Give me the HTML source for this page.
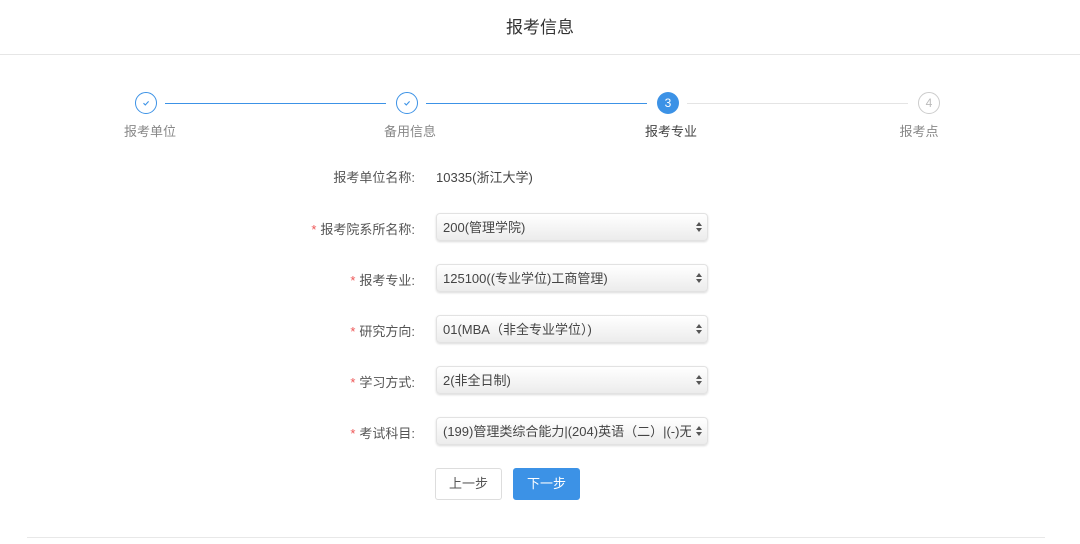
<!DOCTYPE html>
<html><head><meta charset="utf-8"><style>
body{margin:0;width:1080px;height:544px;background:#fff;font-family:"Liberation Sans","Noto Sans CJK SC",sans-serif;position:relative;overflow:hidden;color:#333}
.a{position:absolute}
.hd{left:0;top:0;width:1080px;height:54px;border-bottom:1px solid #e6e6e6;text-align:center;line-height:56px;font-size:17px;color:#333}
.c{width:22px;height:22px;border-radius:50%;box-sizing:border-box;text-align:center;line-height:20px;font-size:12px}
.c svg{position:absolute;left:5px;top:5px}
.done{border:1px solid #3c92e6;color:#3c92e6}
.cur{background:#3c92e6;color:#fff;line-height:22px}
.todo{border:1px solid #ccc;color:#bbb}
.ln{height:1px;top:103px}
.lb{top:120px;font-size:13px;color:#888;width:80px;text-align:center}
.fl{font-size:13px;color:#555;text-align:right;width:200px;left:215px}
.fl i{color:#e55;font-style:normal;margin-right:4px}
.sel{left:436px;width:272px;height:28px;box-sizing:border-box;border:1px solid #e2e2e2;border-radius:4px;background:linear-gradient(#fff,#ececec);box-shadow:0 1px 2px rgba(0,0,0,.15);font-size:13px;color:#444;line-height:28px;padding-left:6px;white-space:nowrap}
.sel span{display:block;overflow:hidden;width:248px}
.sel:after{content:"";position:absolute;right:5px;top:8px;width:0;height:0;border:3px solid transparent;border-bottom:4px solid #555;border-top:none}
.sel:before{content:"";position:absolute;right:5px;top:14px;width:0;height:0;border:3px solid transparent;border-top:4px solid #555;border-bottom:none}
.btn{top:468px;width:67px;height:32px;box-sizing:border-box;border-radius:3px;text-align:center;line-height:30px;font-size:13px}
</style></head><body>
<div class="a hd">报考信息</div>
<div class="a ln" style="left:165px;width:221px;background:#3c92e6"></div>
<div class="a ln" style="left:426px;width:221px;background:#3c92e6"></div>
<div class="a ln" style="left:687px;width:221px;background:#e4e4e4"></div>
<div class="a c done" style="left:135px;top:92px"><svg width="10" height="10" viewBox="0 0 10 10"><path d="M2.5 5.2 L4.3 7 L7.6 3.4" fill="none" stroke="#3c92e6" stroke-width="1.1"/></svg></div>
<div class="a c done" style="left:396px;top:92px"><svg width="10" height="10" viewBox="0 0 10 10"><path d="M2.5 5.2 L4.3 7 L7.6 3.4" fill="none" stroke="#3c92e6" stroke-width="1.1"/></svg></div>
<div class="a c cur" style="left:657px;top:92px">3</div>
<div class="a c todo" style="left:918px;top:92px">4</div>
<div class="a lb" style="left:110px;top:121px">报考单位</div>
<div class="a lb" style="left:370px;top:121px">备用信息</div>
<div class="a lb" style="left:631px;top:121px;color:#444">报考专业</div>
<div class="a lb" style="left:879px;top:121px">报考点</div>
<div class="a fl" style="top:167px">报考单位名称:</div>
<div class="a" style="left:436px;top:167px;font-size:13px;color:#444">10335(浙江大学)</div>
<div class="a fl" style="top:219px"><i>*</i>报考院系所名称:</div>
<div class="a sel" style="top:213px"><span>200(管理学院)</span></div>
<div class="a fl" style="top:270px"><i>*</i>报考专业:</div>
<div class="a sel" style="top:264px"><span>125100((专业学位)工商管理)</span></div>
<div class="a fl" style="top:321px"><i>*</i>研究方向:</div>
<div class="a sel" style="top:315px"><span>01(MBA（非全专业学位）)</span></div>
<div class="a fl" style="top:372px"><i>*</i>学习方式:</div>
<div class="a sel" style="top:366px"><span>2(非全日制)</span></div>
<div class="a fl" style="top:423px"><i>*</i>考试科目:</div>
<div class="a sel" style="top:417px"><span>(199)管理类综合能力|(204)英语（二）|(-)无|(</span></div>
<div class="a btn" style="left:435px;border:1px solid #ddd;color:#555">上一步</div>
<div class="a btn" style="left:513px;background:#3c92e6;color:#fff;border:1px solid #3c92e6">下一步</div>
<div class="a" style="left:27px;top:537px;width:1018px;height:1px;background:#e8e8e8"></div>
</body></html>
